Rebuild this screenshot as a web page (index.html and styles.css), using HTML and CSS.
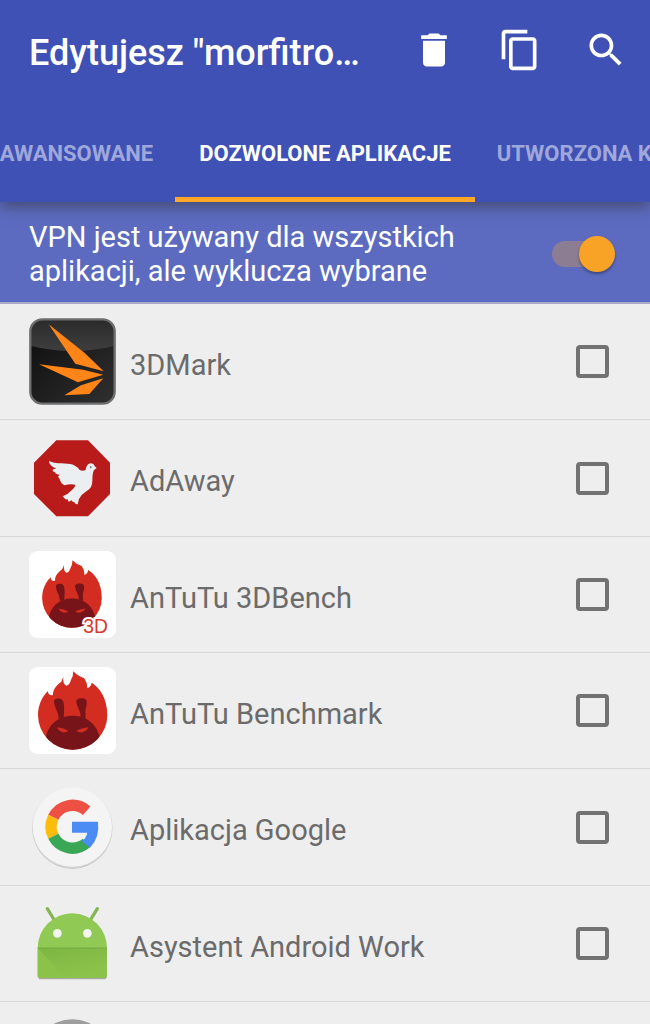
FILE: index.html
```html
<!DOCTYPE html>
<html lang="pl">
<head>
<meta charset="utf-8">
<meta name="viewport" content="width=device-width, initial-scale=1">
<title>Dozwolone aplikacje</title>
<link rel="stylesheet" href="styles.css">
</head>
<body>
<header class="appbar">
  <div class="toolbar">
    <h1 class="title">Edytujesz "morfitro…</h1>
    <button class="action" type="button" aria-label="Usuń">
      <svg viewBox="0 0 24 24"><path d="M6 19c0 1.100.9 2 2 2h8c1.100 0 2-.9 2-2V7H6v12zM19 4h-3.500l-1-1h-5l-1 1H5v2h14V4z"/></svg>
    </button>
    <button class="action" type="button" aria-label="Kopiuj">
      <svg viewBox="0 0 24 24"><path d="M16 1H4c-1.100 0-2 .9-2 2v14h2V3h12V1zm3 4H8c-1.100 0-2 .9-2 2v14c0 1.100.9 2 2 2h11c1.100 0 2-.9 2-2V7c0-1.100-.9-2-2-2zm0 16H8V7h11v14z"/></svg>
    </button>
    <button class="action" type="button" aria-label="Szukaj">
      <svg viewBox="0 0 24 24"><path d="M15.500 14h-.79l-.28-.27C15.410 12.590 16 11.110 16 9.500 16 5.910 13.090 3 9.500 3S3 5.910 3 9.500 5.910 16 9.500 16c1.610 0 3.090-.59 4.230-1.570l.27.28v.79l5 4.990L20.490 19l-4.990-5zm-6 0C7.010 14 5 11.990 5 9.500S7.010 5 9.500 5 14 7.010 14 9.500 11.990 14 9.500 14z"/></svg>
    </button>
  </div>
  <nav class="tabs">
    <button class="tab tab-prev" type="button">AWANSOWANE</button>
    <button class="tab tab-active" type="button">DOZWOLONE APLIKACJE</button>
    <button class="tab tab-next" type="button">UTWORZONA K</button>
  </nav>
</header>
<main>
  <div class="banner">
    <label class="banner-text" for="invert">VPN jest używany dla wszystkich aplikacji, ale wyklucza wybrane</label>
    <input class="switch" type="checkbox" role="switch" id="invert" checked>
  </div>
  <ul class="apps">
    <li class="app">
      <svg class="icon" viewBox="27 24 261 261">
        <defs>
          <linearGradient id="gloss" x1="0" y1="0" x2="0" y2="1"><stop offset="0" stop-color="#2b2b2b"/><stop offset="1" stop-color="#3e3e3e"/></linearGradient>
          <linearGradient id="base" x1="0" y1="0" x2="1" y2="1"><stop offset="0" stop-color="#0c0c0c"/><stop offset="1" stop-color="#303030"/></linearGradient>
        </defs>
        <rect x="30" y="27" width="255" height="255" rx="36" fill="url(#base)"/>
        <path d="M33 108V63Q33 30 66 30H249Q282 30 282 63V108Q158 138 33 108Z" fill="url(#gloss)"/>
        <rect x="31" y="28" width="253" height="253" rx="36" fill="none" stroke="#6c6e70" stroke-width="7"/>
        <g fill="#ff8518">
          <path d="M86 43L195 130L251 184L166 161Z"/>
          <path d="M57 163L190 179L250 194L174 217Z"/>
          <path d="M250 205L208 252L133 256L183 226Z"/>
        </g>
      </svg>
      <label class="name" for="app1">3DMark</label>
      <input class="check" type="checkbox" id="app1">
    </li>
    <li class="app">
      <svg class="icon" viewBox="27 13 261 261">
        <path d="M109 29H204L270 96V190L204 257H109L42 190V96Z" fill="#b91b1b"/>
        <path d="M87 90Q101 98 124 98L151 100Q169 104 179 118Q190 123 197 117Q199 101 211 98Q222 98 224 107L230 112L222 118Q217 127 217 150Q217 173 200 181Q184 191 177 205L173 221Q166 222 162 213Q158 217 155 209L146 213L143 206Q135 208 128 197Q145 191 155 179Q166 169 166 162Q148 159 134 164Q122 159 119 145L114 138L119 132Q108 132 104 124Q96 123 99 116L109 114Q86 104 87 90Z" fill="#eceff1"/>
        <circle cx="212" cy="110" r="3" fill="#777"/>
      </svg>
      <label class="name" for="app2">AdAway</label>
      <input class="check" type="checkbox" id="app2">
    </li>
    <li class="app">
      <svg class="icon" viewBox="27 22 261 261">
        <rect x="27" y="22" width="261" height="261" rx="26" fill="#fff"/>
        <g transform="translate(20 20) scale(.86)">
          <g id="flame">
            <clipPath id="disc"><circle cx="158" cy="166" r="104"/></clipPath>
            <path d="M54 166C54 137 66 111 84 94Q84 105 93 107L99 106C98 85 115 73 124 66Q127 58 130 52Q128 74 139 78C151 76 151 62 158 50L160 35Q175 51 192 55Q202 68 202 86L209 82Q214 76 215 69C237 82 262 113 262 166A104 104 0 0 1 54 166Z" fill="#d22d20"/>
            <g fill="#77141a">
              <path clip-path="url(#disc)" d="M75 240C84 195 113 168 158 168S232 195 241 240L225 275H90Z"/>
              <path d="M102 127C101 117 111 115 121 117C134 121 134 142 131 174L116 177C116 157 104 146 102 127ZM169 128C168 117 178 115 188 116C202 117 202 130 199 140C194 153 197 164 197 177L182 172C182 153 172 146 169 128Z"/>
            </g>
            <path d="M111 203Q132 205 145 213Q139 219 128 218Q116 215 111 203ZM205 203Q184 205 169 213Q175 219 187 218Q200 215 205 203Z" fill="#d22d20"/>
          </g>
        </g>
        <text class="badge" x="190" y="268">3D</text>
      </svg>
      <label class="name" for="app3">AnTuTu 3DBench</label>
      <input class="check" type="checkbox" id="app3">
    </li>
    <li class="app">
      <svg class="icon" viewBox="27 22 261 261">
        <rect x="27" y="22" width="261" height="261" rx="26" fill="#fff"/>
        <use href="#flame"/>
      </svg>
      <label class="name" for="app4">AnTuTu Benchmark</label>
      <input class="check" type="checkbox" id="app4">
    </li>
    <li class="app">
      <svg class="icon" viewBox="27 12 261 261">
        <circle cx="157" cy="147" r="119" fill="#b4b4b4"/>
        <circle cx="157" cy="144" r="121" fill="#d4d4d4"/>
        <circle cx="157" cy="141" r="119" fill="#f4f4f4"/>
        <g fill="none" stroke-width="34">
          <path d="M200 92A64 64 0 0 0 100 112" stroke="#ee5044"/>
          <path d="M100 112A64 64 0 0 0 100 169" stroke="#fbbc0c"/>
          <path d="M100 169A64 64 0 0 0 199 189" stroke="#3aa757"/>
        </g>
        <path d="M156 125H234Q240 172 210 203L185 183Q199 174 202 158H156Z" fill="#4b8bf4"/>
      </svg>
      <label class="name" for="app5">Aplikacja Google</label>
      <input class="check" type="checkbox" id="app5">
    </li>
    <li class="app">
      <svg class="icon" viewBox="27 16 261 261">
        <defs><linearGradient id="fold" x1="0" y1="0" x2=".5" y2="1"><stop offset="0" stop-color="#75ad40"/><stop offset="1" stop-color="#8bc34a"/></linearGradient></defs>
        <path d="M53 165H261V243Q261 254 250 254H64Q53 254 53 243Z" fill="#aaaaa6"/>
        <path d="M82 42L101 73M232 42L213 73" stroke="#86b557" stroke-width="10" stroke-linecap="round"/>
        <path d="M53 160A104 104 0 0 1 261 160Z" fill="#90c954"/>
        <path d="M53 160H261V240Q261 250 251 250H63Q53 250 53 240Z" fill="#8bc34a"/>
        <path d="M53 160H261V205L230 250H136Z" fill="url(#fold)" opacity=".6"/>
        <path d="M53 160H261" stroke="#76aa43" stroke-width="3"/>
        <circle cx="112" cy="116" r="13" fill="#f3f5ef"/><circle cx="202" cy="116" r="13" fill="#f3f5ef"/>
      </svg>
      <label class="name" for="app6">Asystent Android Work</label>
      <input class="check" type="checkbox" id="app6">
    </li>
    <li class="app">
      <svg class="icon" viewBox="27 12 261 261"><circle cx="157" cy="141" r="119" fill="#9e9e9e"/></svg>
    </li>
  </ul>
</main>
</body>
</html>
```
FILE: styles.css
```css
* { box-sizing: border-box; }
body {
  margin: 0;
  height: 100vh;
  overflow: hidden;
  background: #eee;
  color: #6b6b6b;
  font-family: Roboto, sans-serif;
}
button {
  border: 0;
  padding: 0;
  background: none;
  color: inherit;
  font: inherit;
}
.appbar {
  position: relative;
  background: #3f51b5;
  color: #fff;
  box-shadow: 0 4px 14px rgba(50, 50, 50, .6);
}
.toolbar {
  display: flex;
  align-items: center;
  gap: 42px;
  height: 104px;
  padding: 0 22px 4px 29px;
}
.title {
  flex: 1;
  margin: 0;
  padding-top: 6px;
  overflow: hidden;
  font-size: 36px;
  font-weight: 500;
  line-height: 44px;
  white-space: nowrap;
}
.action, .action svg {
  display: block;
  width: 44px;
  height: 44px;
}
.action svg { fill: currentColor; }
.tabs {
  display: grid;
  grid-template-columns: 1fr auto 1fr;
  height: 98px;
}
.tab {
  display: flex;
  align-items: center;
  min-width: 0;
  padding: 5px 22px 0;
  overflow: hidden;
  border-bottom: 5px solid transparent;
  color: #9fa8da;
  font-size: 22px;
  font-weight: 700;
  white-space: nowrap;
}
.tab-prev { justify-content: flex-end; padding-left: 0; }
.tab-next { padding-right: 0; }
.tab-active {
  padding: 5px 24px 0;
  border-color: #ffa726;
  color: #fff;
}
.banner {
  display: flex;
  align-items: center;
  justify-content: space-between;
  padding: 18px 35px 14px 29px;
  border-bottom: 2px solid #a9abc6;
  background: #5c6bc0;
  color: #fff;
}
.banner-text {
  width: 75%;
  font-size: 29px;
  line-height: 34px;
}
.switch {
  appearance: none;
  display: flex;
  align-items: center;
  justify-content: flex-end;
  width: 63px;
  height: 26px;
  margin: 0;
  border-radius: 13px;
  background: #8d7d93;
}
.switch::before {
  content: "";
  width: 36px;
  height: 36px;
  flex: none;
  border-radius: 50%;
  background: #f9a326;
  box-shadow: 0 2px 3px rgba(0, 0, 0, .35);
}
.apps {
  margin: 0;
  padding: 0;
  list-style: none;
}
.app {
  display: flex;
  align-items: center;
  height: 116px;
  padding: 0 41px 0 29px;
  border-bottom: 1px solid #d8d8d8;
}
.app:nth-child(3n + 2) { height: 117px; }
.icon {
  flex: none;
  width: 87px;
  height: 87px;
  margin-right: 14px;
}
.name {
  flex: 1;
  padding-top: 6px;
  font-size: 29px;
  line-height: 34px;
}
.check {
  appearance: none;
  width: 33px;
  height: 33px;
  margin: 0;
  border: 4px solid #727272;
  border-radius: 4px;
}
.badge {
  fill: #d93a2b;
  stroke: #fff;
  stroke-width: 12px;
  paint-order: stroke;
  font-family: "Liberation Sans", sans-serif;
  font-size: 58px;
}
```
